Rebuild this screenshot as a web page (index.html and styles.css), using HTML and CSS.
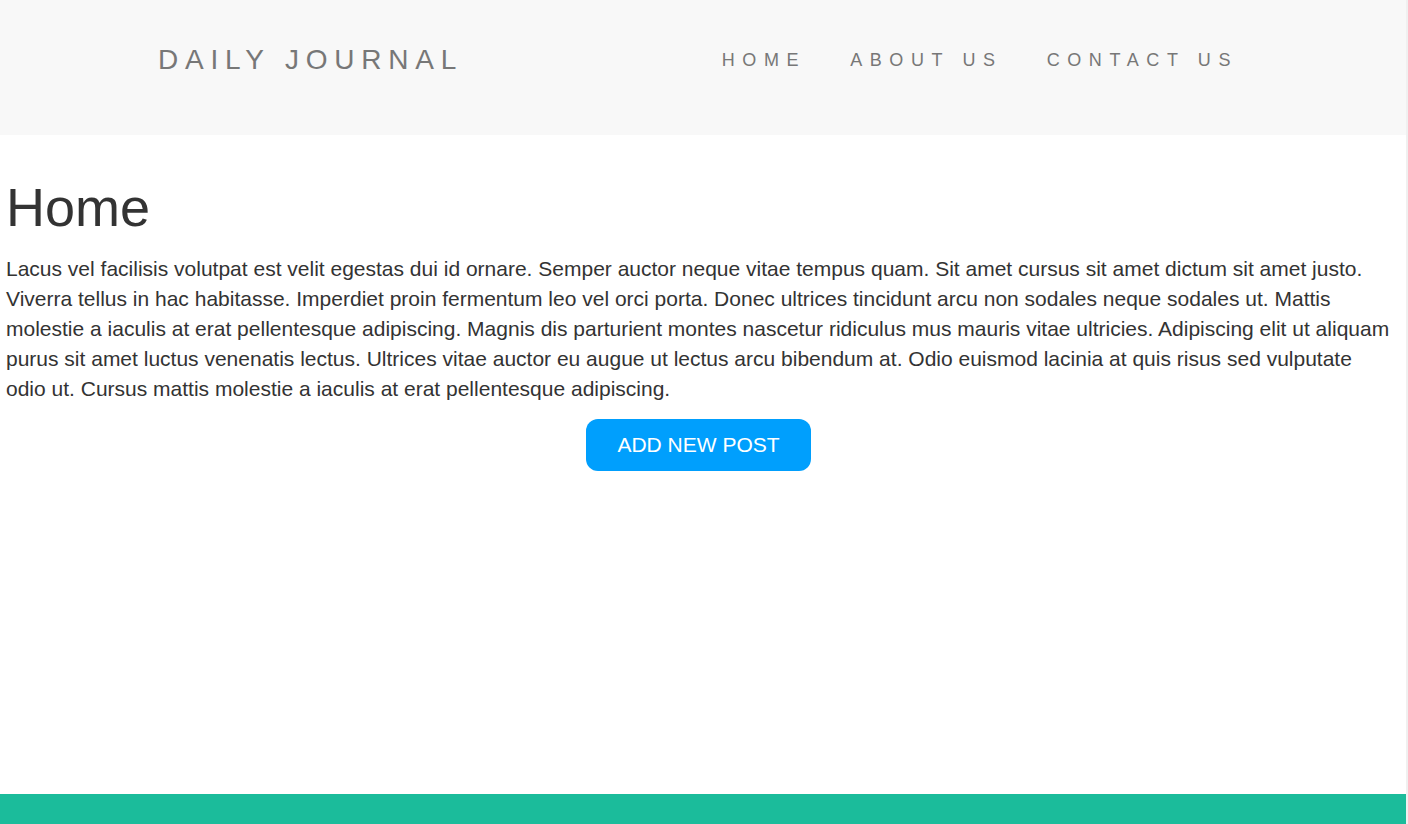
FILE: index.html
```html
<!DOCTYPE html>
<html lang="en">
<head>
<meta charset="utf-8">
<title>Daily Journal</title>
<link rel="stylesheet" href="styles.css">
</head>
<body>
<div class="page">
  <header class="site-header">
    <div class="container">
      <a class="brand" href="#">DAILY JOURNAL</a>
      <nav class="nav">
        <a href="#">HOME</a>
        <a href="#">ABOUT US</a>
        <a href="#">CONTACT US</a>
      </nav>
    </div>
  </header>
  <main class="content">
    <h1>Home</h1>
    <p>Lacus vel facilisis volutpat est velit egestas dui id ornare. Semper auctor neque vitae tempus quam. Sit amet cursus sit amet dictum sit amet justo. Viverra tellus in hac habitasse. Imperdiet proin fermentum leo vel orci porta. Donec ultrices tincidunt arcu non sodales neque sodales ut. Mattis molestie a iaculis at erat pellentesque adipiscing. Magnis dis parturient montes nascetur ridiculus mus mauris vitae ultricies. Adipiscing elit ut aliquam purus sit amet luctus venenatis lectus. Ultrices vitae auctor eu augue ut lectus arcu bibendum at. Odio euismod lacinia at quis risus sed vulputate odio ut. Cursus mattis molestie a iaculis at erat pellentesque adipiscing.</p>
    <div class="actions">
      <a class="btn" href="#">ADD NEW POST</a>
    </div>
  </main>
  <footer class="site-footer"></footer>
</div>
</body>
</html>
```
FILE: styles.css
```css
html {
  background: #f0f0f0;
}
body {
  margin: 0 2px 0 0;
  background: #fff;
  font-family: "Liberation Sans", Arial, sans-serif;
  color: #333;
}
.page {
  min-height: 100vh;
  display: flex;
  flex-direction: column;
}
.site-header {
  background: #f8f8f8;
  height: 135px;
}
.container {
  width: 1090px;
  margin: 0 auto;
  height: 100%;
  display: flex;
  align-items: center;
  justify-content: space-between;
  box-sizing: border-box;
  padding-right: 10px;
  padding-bottom: 16px;
}
.brand {
  font-size: 28px;
  letter-spacing: 6.8px;
  color: #777;
  text-decoration: none;
}
.nav {
  display: flex;
  gap: 44px;
  padding-top: 1px;
}
.nav a {
  font-size: 18px;
  letter-spacing: 7.6px;
  color: #777;
  text-decoration: none;
}
.content {
  flex: 1;
  padding: 0 12px 0 6px;
}
h1 {
  font-size: 54px;
  font-weight: normal;
  line-height: 67px;
  margin: 39px 0 13px;
  color: #333;
}
p {
  font-size: 21px;
  line-height: 30px;
  margin: 0;
}
.actions {
  display: flex;
  justify-content: center;
  padding-right: 3px;
  margin-top: 15px;
}
.btn {
  display: inline-flex;
  align-items: center;
  justify-content: center;
  width: 225px;
  height: 52px;
  border-radius: 12px;
  background: #009ffd;
  color: #fff;
  font-size: 21px;
  text-decoration: none;
}
.site-footer {
  height: 30px;
  background: #1bbc9b;
}
```
